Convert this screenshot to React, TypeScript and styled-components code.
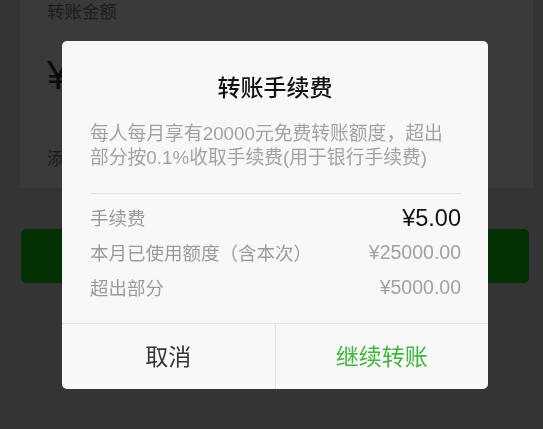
import React from 'react';
import styled, { createGlobalStyle } from 'styled-components';

const GlobalStyle = createGlobalStyle`
  html, body {
    margin: 0;
    padding: 0;
  }
  body {
    background: #adadad;
    font-family: "Liberation Sans", "Noto Sans CJK SC", sans-serif;
    overflow: hidden;
  }
`;

const Page = styled.div`
  width: 543px;
  height: 429px;
  overflow: hidden;
`;

// transfer form behind the mask
const AmountCard = styled.div`
  margin: 0 10px 0 20px;
  padding: 0 0 16px 27px;
  background: #c1c1c1;
`;

const CardLabel = styled.div`
  font-size: 17.5px;
  line-height: 24px;
  color: #646464;
`;

const AmountRow = styled.div`
  margin-top: 21px;
  height: 60px;
  font-size: 40px;
  line-height: 60px;
  color: #2b2b2b;
`;

const RemarkLink = styled.div`
  margin-top: 43px;
  font-size: 17px;
  line-height: 24px;
  color: #5d5d5d;
`;

const SubmitButton = styled.div`
  margin: 41px 14px 0 21px;
  height: 54px;
  border-radius: 5px;
  background: #0ea40e;
`;

const Mask = styled.div`
  position: fixed;
  inset: 0;
  box-sizing: border-box;
  padding-left: 7px;
  background: rgba(0, 0, 0, 0.7);
  display: flex;
  align-items: center;
  justify-content: center;
`;

const Dialog = styled.div`
  width: 426px;
  background: #f8f8f8;
  border-radius: 5px;
  overflow: hidden;
`;

const Title = styled.div`
  padding-top: 32px;
  font-size: 23px;
  line-height: 31px;
  font-weight: 500;
  color: #111;
  text-align: center;
`;

const Body = styled.div`
  padding: 0 27px 18px 28px;
`;

const Desc = styled.div`
  margin-top: 18.5px;
  font-size: 18.8px;
  line-height: 24px;
  color: #a3a3a3;
`;

const Divider = styled.div`
  margin: 22.5px 0 6px;
  height: 1px;
  background: #e2e2e2;
`;

const FeeRow = styled.div`
  height: 35px;
  display: flex;
  align-items: center;
  justify-content: space-between;
`;

const FeeLabel = styled.span`
  font-size: 18.5px;
  color: #9b9b9b;
`;

const FeeValue = styled.span<{ $strong?: boolean }>`
  font-size: ${p => (p.$strong ? '23.5px' : '19.5px')};
  color: ${p => (p.$strong ? '#111' : '#a2a2a2')};
  padding-top: ${p => (p.$strong ? '3px' : '0')};
`;

const Footer = styled.div`
  display: flex;
  border-top: 1px solid #e3e3e3;
`;

const FooterButton = styled.button<{ $primary?: boolean }>`
  flex: 1;
  height: 65px;
  padding: 0 0 3px;
  border: none;
  border-left: ${p => (p.$primary ? '1px solid #e3e3e3' : 'none')};
  background: transparent;
  font-family: inherit;
  font-size: 23px;
  color: ${p => (p.$primary ? '#3db83a' : '#353535')};
`;

const fees = [
  { label: '手续费', value: '¥5.00', strong: true },
  { label: '本月已使用额度（含本次）', value: '¥25000.00' },
  { label: '超出部分', value: '¥5000.00' },
];

export default function App() {
  return (
    <Page>
      <GlobalStyle />
      <AmountCard>
        <CardLabel>转账金额</CardLabel>
        <AmountRow>¥</AmountRow>
        <RemarkLink>添加转账说明</RemarkLink>
      </AmountCard>
      <SubmitButton />

      <Mask>
        <Dialog>
          <Title>转账手续费</Title>
          <Body>
            <Desc>
              每人每月享有20000元免费转账额度，超出
              <br />
              部分按0.1%收取手续费(用于银行手续费)
            </Desc>
            <Divider />
            {fees.map(f => (
              <FeeRow key={f.label}>
                <FeeLabel>{f.label}</FeeLabel>
                <FeeValue $strong={f.strong}>{f.value}</FeeValue>
              </FeeRow>
            ))}
          </Body>
          <Footer>
            <FooterButton>取消</FooterButton>
            <FooterButton $primary>继续转账</FooterButton>
          </Footer>
        </Dialog>
      </Mask>
    </Page>
  );
}
